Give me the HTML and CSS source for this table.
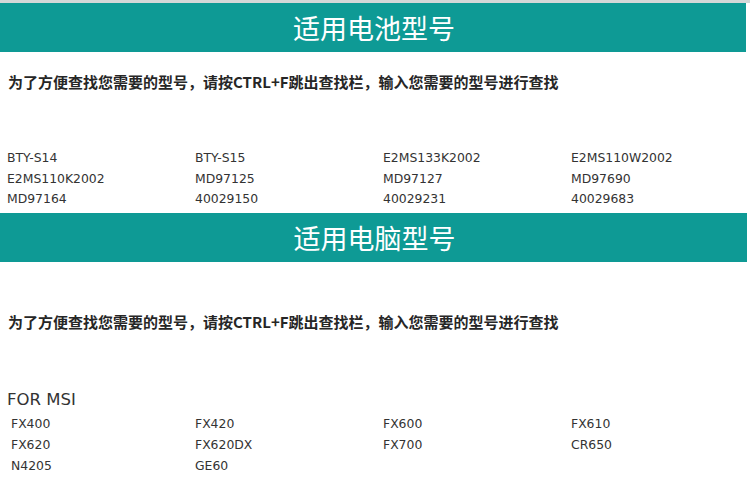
FILE: index.html
```html
<!DOCTYPE html>
<html lang="zh-CN">
<head>
<meta charset="utf-8">
<title>适用型号</title>
<link rel="stylesheet" href="styles.css">
</head>
<body>
<div class="top-line"></div>
<section class="section">
  <h2 class="banner">适用电池型号</h2>
  <p class="note">为了方便查找您需要的型号，请按CTRL+F跳出查找栏，输入您需要的型号进行查找</p>
  <div class="grid grid-battery">
    <span>BTY-S14</span><span>BTY-S15</span><span>E2MS133K2002</span><span>E2MS110W2002</span>
    <span>E2MS110K2002</span><span>MD97125</span><span>MD97127</span><span>MD97690</span>
    <span>MD97164</span><span>40029150</span><span>40029231</span><span>40029683</span>
  </div>
</section>
<section class="section second">
  <h2 class="banner banner-2">适用电脑型号</h2>
  <p class="note note-2">为了方便查找您需要的型号，请按CTRL+F跳出查找栏，输入您需要的型号进行查找</p>
  <h3 class="brand">FOR MSI</h3>
  <div class="grid grid-pc">
    <span class="first">FX400</span><span>FX420</span><span>FX600</span><span>FX610</span>
    <span class="first">FX620</span><span>FX620DX</span><span>FX700</span><span>CR650</span>
    <span class="first">N4205</span><span>GE60</span>
  </div>
</section>
</body>
</html>
```

FILE: styles.css
```css
html, body {
  margin: 0;
  padding: 0;
  background: #ffffff;
}

body {
  width: 750px;
  font-family: "DejaVu Sans", "Noto Sans CJK SC", sans-serif;
  color: #333333;
}

.top-line {
  height: 3px;
  background: #d4d8d8;
}

.banner {
  margin: 0;
  height: 49px;
  line-height: 49px;
  background: #0e9a95;
  color: #ffffff;
  text-align: center;
  font-family: "Noto Sans CJK SC", sans-serif;
  font-weight: 400;
  font-size: 27px;
  width: 746px;
  padding-left: 2px;
  box-sizing: border-box;
}

.banner-2 {
  width: 747px;
}

.note {
  margin: 20px 0 0 8px;
  height: 20px;
  line-height: 20px;
  font-family: "Noto Sans CJK SC", sans-serif;
  font-weight: 700;
  font-size: 15px;
  color: #262626;
}

.grid {
  display: grid;
  grid-template-columns: repeat(4, 188px);
  padding-left: 7px;
  font-size: 12.4px;
  color: #333333;
}

.grid-battery {
  margin-top: 56px;
  line-height: 20.6px;
  margin-bottom: 3px;
}

.note-2 {
  margin-top: 50px;
}

.brand {
  margin: 57px 0 0 7px;
  height: 22px;
  line-height: 22px;
  font-size: 16.5px;
  font-weight: 400;
  color: #333333;
}

.grid-pc {
  margin-top: 2px;
  line-height: 21px;
}

.grid-pc .first {
  padding-left: 4px;
}
```
